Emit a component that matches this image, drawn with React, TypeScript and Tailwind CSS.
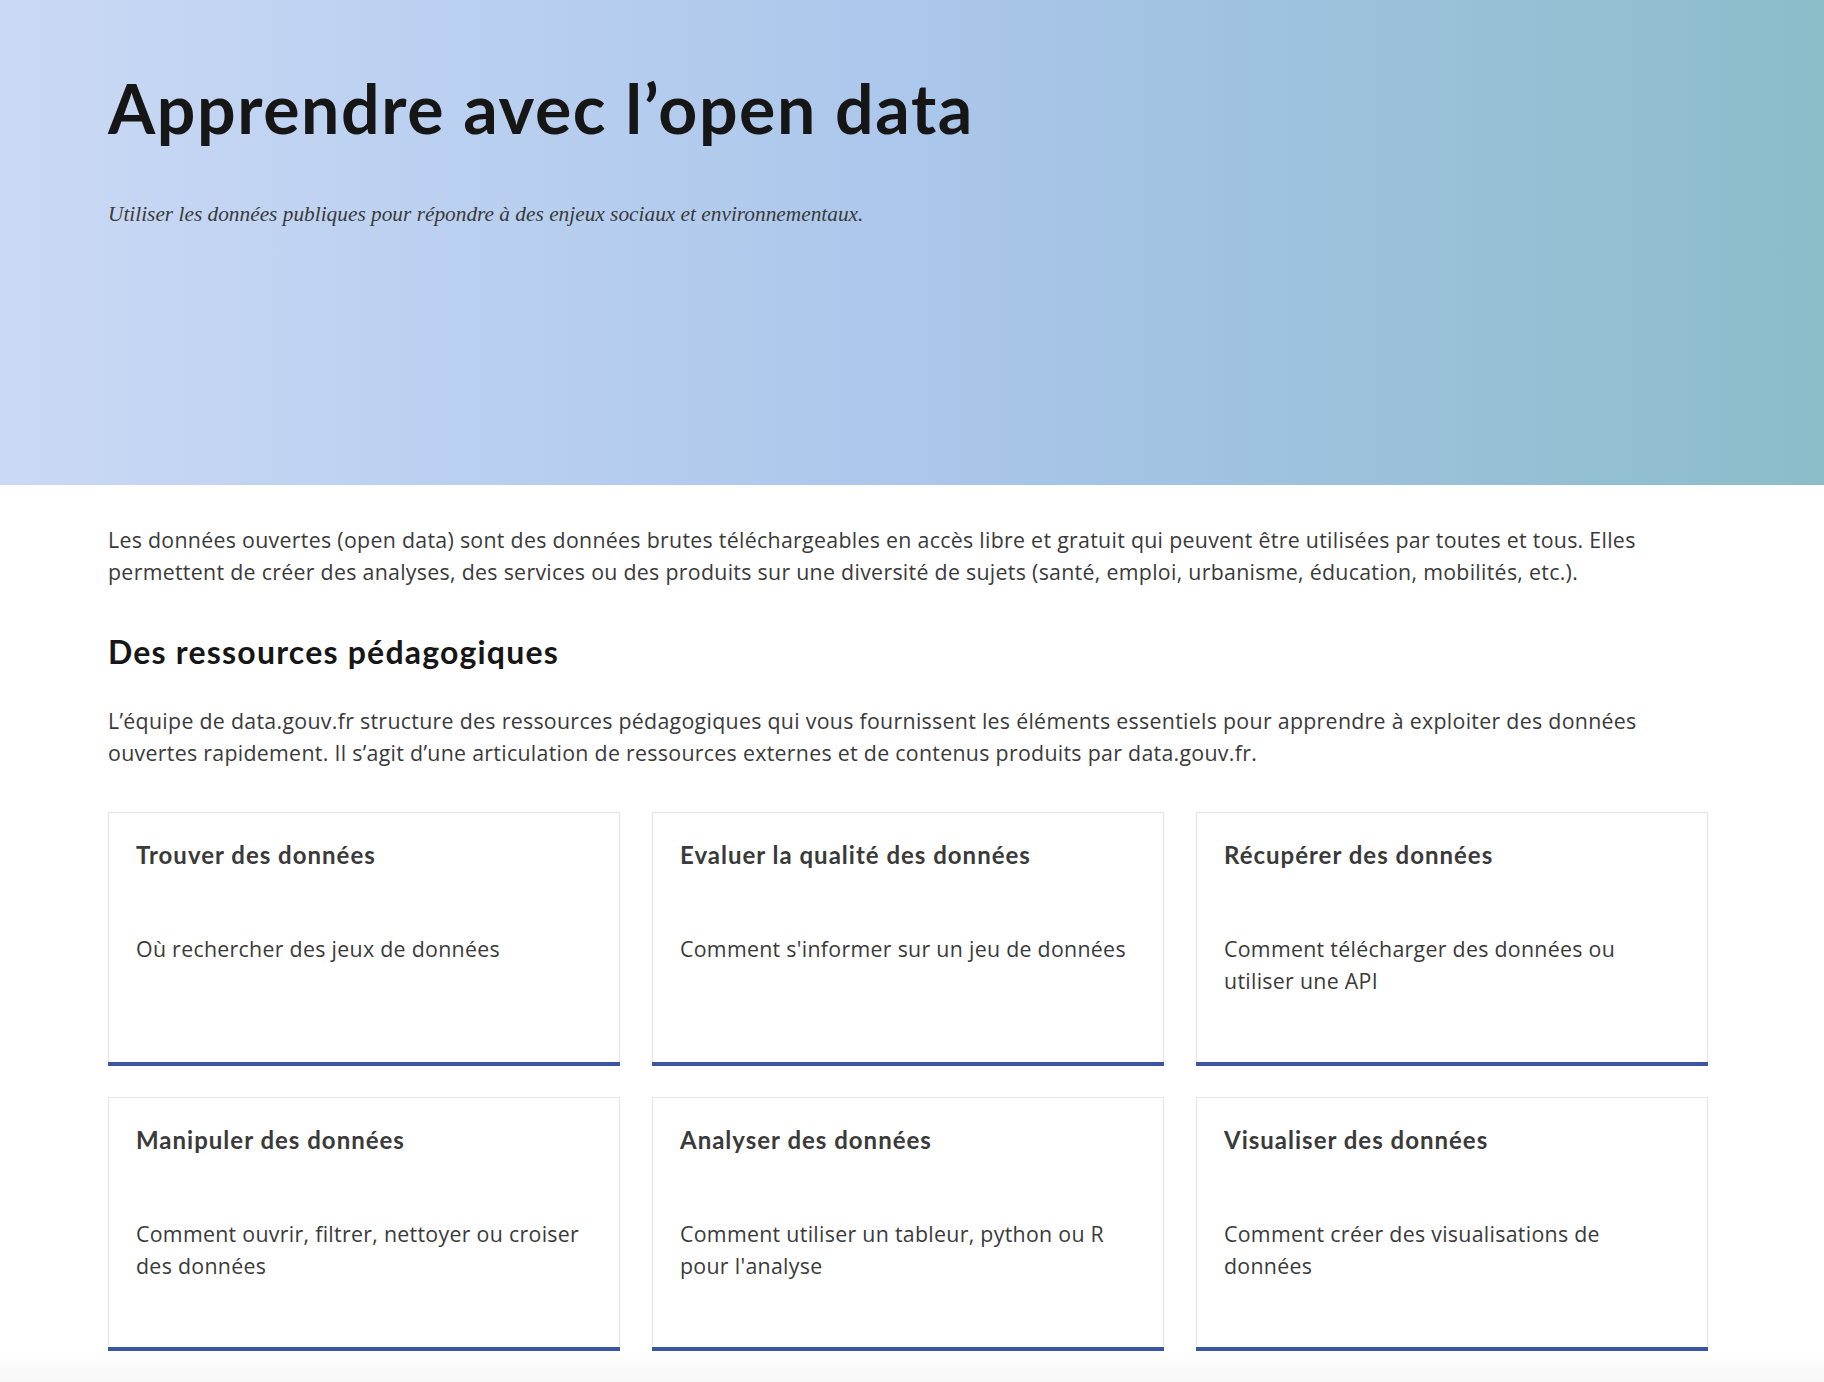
import React from "react";

const cards = [
  { title: "Trouver des données", desc: "Où rechercher des jeux de données" },
  { title: "Evaluer la qualité des données", desc: "Comment s'informer sur un jeu de données" },
  { title: "Récupérer des données", desc: "Comment télécharger des données ou utiliser une API" },
  { title: "Manipuler des données", desc: "Comment ouvrir, filtrer, nettoyer ou croiser des données" },
  { title: "Analyser des données", desc: "Comment utiliser un tableur, python ou R pour l'analyse" },
  { title: "Visualiser des données", desc: "Comment créer des visualisations de données" },
];

export default function App() {
  return (
    <div className="min-h-[1382px] bg-white font-['Lato',sans-serif] text-[#3a3a3a]">
      <header className="h-[485px] bg-[linear-gradient(90deg,#cad9f5_0%,#abc7eb_50%,#a2c3e2_65%,#8bbdc9_100%)]">
        <div className="ml-[108px] w-[1600px] pt-[70px]">
          <h1 className="text-[68px] font-bold leading-[76px] tracking-[1.6px] text-[#161616]">Apprendre avec l’open data</h1>
          <p className="mt-[52px] font-['Liberation_Serif',serif] text-[21.33px] italic leading-[32px] text-[#3a3a3a]">
            Utiliser les données publiques pour répondre à des enjeux sociaux et environnementaux.
          </p>
        </div>
      </header>
      <main className="ml-[108px] w-[1600px]">
        <p className="mt-[39px] font-['Open_Sans',sans-serif] text-[21.33px] leading-[32px] tracking-[0.3px]">
          Les données ouvertes (open data) sont des données brutes téléchargeables en accès libre et gratuit qui peuvent être utilisées par toutes et tous. Elles permettent de créer des analyses, des services ou des produits sur une diversité de sujets (santé, emploi, urbanisme, éducation, mobilités, etc.).
        </p>
        <h2 className="mt-[42px] text-[32px] font-bold leading-[43px] tracking-[1.2px] text-[#161616]">Des ressources pédagogiques</h2>
        <p className="mt-[32px] font-['Open_Sans',sans-serif] text-[21.33px] leading-[32px] tracking-[0.3px]">
          L’équipe de data.gouv.fr structure des ressources pédagogiques qui vous fournissent les éléments essentiels pour apprendre à exploiter des données ouvertes rapidement. Il s’agit d’une articulation de ressources externes et de contenus produits par data.gouv.fr.
        </p>
        <div className="mt-[43px] grid grid-cols-3 gap-x-[32px] gap-y-[31px]">
          {cards.map((c) => (
            <div key={c.title} className="flex flex-col border border-b-0 border-[#e5e5e5] bg-white">
              <div className="flex-1 px-[27px] pt-[26px] pb-[65px]">
                <h3 className="text-[24px] font-bold leading-[32px] tracking-[1px] text-[#3a3a3a]">{c.title}</h3>
                <p className="mt-[62px] font-['Open_Sans',sans-serif] text-[21.33px] leading-[32px] tracking-[0.3px]">{c.desc}</p>
              </div>
              <div className="-mx-px h-[4px] bg-[#3a55a1]" />
            </div>
          ))}
        </div>
      </main>
      <div className="h-[40px] bg-gradient-to-b from-white to-[#f4f4f4]" />
    </div>
  );
}
